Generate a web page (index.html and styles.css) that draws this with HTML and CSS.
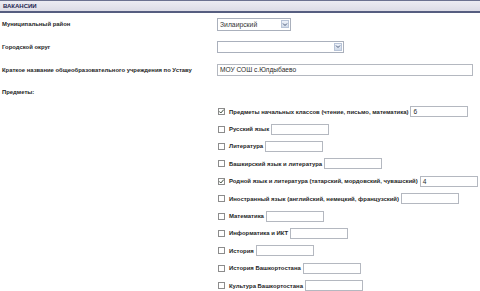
FILE: index.html
```html
<!DOCTYPE html>
<html lang="ru">
<head>
<meta charset="utf-8">
<title>Вакансии</title>
<link rel="stylesheet" href="styles.css">
</head>
<body>
<div class="page">
  <div class="header">ВАКАНСИИ</div>
  <div class="row r1">
    <div class="label">Муниципальный район</div>
    <div class="field">
      <div class="select s1"><span class="val">Зилаирский</span><span class="arrow"><svg width="6" height="5" viewBox="0 0 6 5"><path d="M1 1.5 L3 3.5 L5 1.5" fill="none" stroke="#4a5a7a" stroke-width="1"/></svg></span></div>
    </div>
  </div>
  <div class="row r2">
    <div class="label">Городской округ</div>
    <div class="field">
      <div class="select s2"><span class="val"></span><span class="arrow"><svg width="6" height="5" viewBox="0 0 6 5"><path d="M1 1.5 L3 3.5 L5 1.5" fill="none" stroke="#4a5a7a" stroke-width="1"/></svg></span></div>
    </div>
  </div>
  <div class="row r3">
    <div class="label">Краткое название общеобразовательного учреждения по Уставу</div>
    <div class="field"><div class="text wide">МОУ СОШ с.Юлдыбаево</div></div>
  </div>
  <div class="row r4">
    <div class="label">Предметы:</div>
    <div class="field"></div>
  </div>
  <div class="subjects">
    <div class="subj"><span class="cb checked"><svg width="7" height="7" viewBox="0 0 7 7"><path d="M1.2 3.4 L2.8 5 L5.8 1.6" fill="none" stroke="#3a4a3a" stroke-width="1"/></svg></span><span class="sname">Предметы начальных классов (чтение, письмо, математика)</span><span class="text small">6</span></div>
    <div class="subj"><span class="cb"></span><span class="sname">Русский язык</span><span class="text small"></span></div>
    <div class="subj"><span class="cb"></span><span class="sname">Литература</span><span class="text small"></span></div>
    <div class="subj"><span class="cb"></span><span class="sname">Башкирский язык и литература</span><span class="text small"></span></div>
    <div class="subj"><span class="cb checked"><svg width="7" height="7" viewBox="0 0 7 7"><path d="M1.2 3.4 L2.8 5 L5.8 1.6" fill="none" stroke="#3a4a3a" stroke-width="1"/></svg></span><span class="sname">Родной язык и литература (татарский, мордовский, чувашский)</span><span class="text small">4</span></div>
    <div class="subj"><span class="cb"></span><span class="sname">Иностранный язык (английский, немецкий, французский)</span><span class="text small"></span></div>
    <div class="subj"><span class="cb"></span><span class="sname">Математика</span><span class="text small"></span></div>
    <div class="subj"><span class="cb"></span><span class="sname">Информатика и ИКТ</span><span class="text small"></span></div>
    <div class="subj"><span class="cb"></span><span class="sname">История</span><span class="text small"></span></div>
    <div class="subj"><span class="cb"></span><span class="sname">История Башкортостана</span><span class="text small"></span></div>
    <div class="subj"><span class="cb"></span><span class="sname">Культура Башкортостана</span><span class="text small"></span></div>
  </div>
</div>
</body>
</html>
```

FILE: styles.css
```css
html, body {
  margin: 0;
  padding: 0;
  background: #ffffff;
}
body {
  width: 480px;
  height: 291px;
  overflow: hidden;
  font-family: "Liberation Sans", Arial, sans-serif;
  color: #1e1e1e;
}
.page {
  display: flex;
  flex-direction: column;
}
.header {
  height: 10px;
  border-top: 1px solid #6c7290;
  border-bottom: 2px solid #565e80;
  background: linear-gradient(#ececf2, #dcdce6);
  font-weight: bold;
  font-size: 6px;
  line-height: 10px;
  color: #1c2450;
  padding-left: 3px;
}
.row {
  display: flex;
  align-items: center;
}
.r1 { height: 22px; }
.r2 { height: 23px; }
.r3 { height: 23px; }
.r4 { height: 22px; }
.label {
  width: 215px;
  padding-left: 2px;
  box-sizing: border-box;
  font-weight: bold;
  font-size: 5.9px;
  color: #1e1e1e;
}
.field {
  display: flex;
  align-items: center;
  padding-left: 2px;
}
.select {
  display: flex;
  align-items: center;
  box-sizing: border-box;
  border: 1px solid #aab0bc;
  background: #fff;
  font-size: 6.8px;
  color: #333;
}
.select .val {
  flex: 1;
  padding-left: 2px;
}
.select .arrow {
  width: 8px;
  height: 8px;
  margin-right: 1px;
  box-sizing: border-box;
  border: 1px solid #b8c4d8;
  background: linear-gradient(#eef2fa, #d0dae8);
  display: flex;
  align-items: center;
  justify-content: center;
}
.s1 { width: 74px; height: 13px; }
.s2 { width: 127px; height: 12px; }
.text {
  box-sizing: border-box;
  border: 1px solid #b4b8c0;
  background: #fff;
  font-size: 6.6px;
  color: #2a2a2a;
  display: flex;
  align-items: center;
  padding-left: 2px;
}
.wide { width: 256px; height: 12px; }
.subjects {
  display: flex;
  flex-direction: column;
  padding-left: 218px;
}
.subj {
  height: 17.4px;
  display: flex;
  align-items: center;
  flex-shrink: 0;
}
.cb {
  width: 7px;
  height: 7px;
  box-sizing: border-box;
  border: 1px solid #8c8c8c;
  background: #fff;
  display: flex;
  align-items: center;
  justify-content: center;
  margin-right: 4px;
}
.cb svg { display: block; flex-shrink: 0; }
.sname {
  font-weight: bold;
  font-size: 5.95px;
  color: #1e1e1e;
  white-space: nowrap;
  margin-right: 2px;
}
.small {
  width: 58px;
  height: 11px;
}
```
